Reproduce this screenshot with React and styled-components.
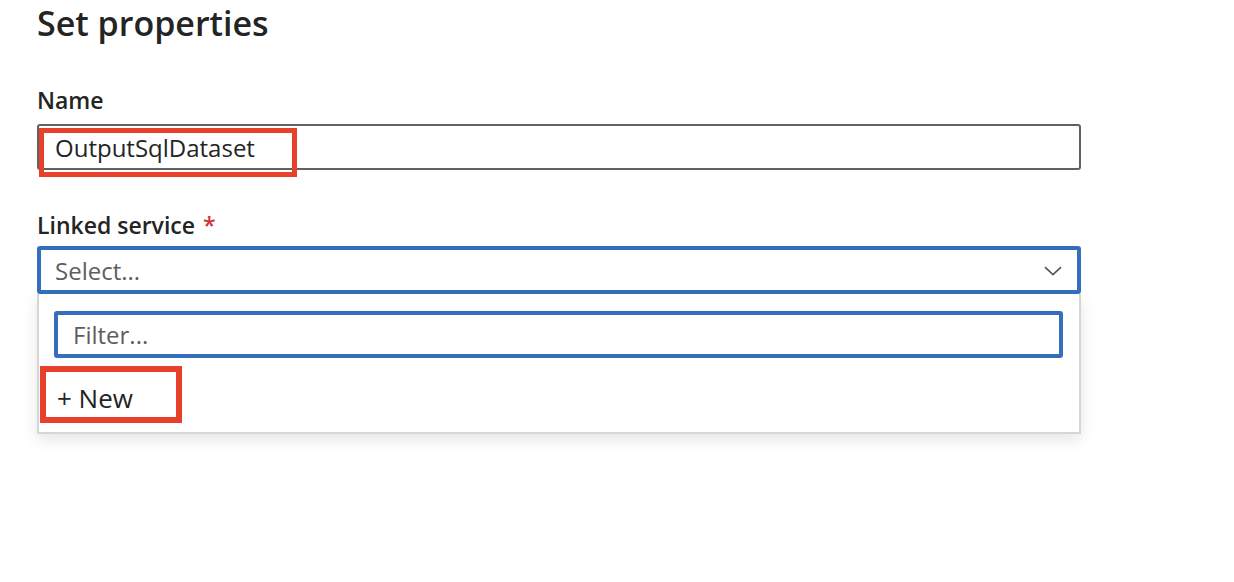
import React from 'react';
import styled, { createGlobalStyle } from 'styled-components';

const GlobalStyle = createGlobalStyle`
  body {
    margin: 0;
    background: #ffffff;
    font-family: "Open Sans", "Noto Sans", sans-serif;
    color: #242424;
  }
`;

const App = () => {
  return (
    <>
      <GlobalStyle />
      <Page>
        <Title>Set properties</Title>

        <Field $gap={42} $inner={9}>
          <Label>Name</Label>
          <InputWrap>
            <TextBox>OutputSqlDataset</TextBox>
            <Highlight $left={2} $top={4} $width={258} $height={49} $border={5} />
          </InputWrap>
        </Field>

        <Field $gap={40} $inner={6}>
          <Label>
            Linked service <Required>*</Required>
          </Label>
          <div>
            <SelectBox>
              <Placeholder>Select...</Placeholder>
              <Chevron width="18" height="10" viewBox="0 0 18 10">
                <path d="M1 1.2 L9 8.6 L17 1.2" fill="none" stroke="#555" strokeWidth="1.6" />
              </Chevron>
            </SelectBox>
            <Dropdown>
              <FilterBox>
                <Placeholder>Filter...</Placeholder>
              </FilterBox>
              <Option>
                + New
                <Highlight $left={1} $top={8} $width={142} $height={57} $border={6} />
              </Option>
            </Dropdown>
          </div>
        </Field>
      </Page>
    </>
  );
};

export default App;

const Page = styled.div`
  width: 1044px;
  padding: 3px 0 40px 37px;
`;

const Title = styled.h1`
  margin: 0;
  font-size: 34px;
  line-height: 40px;
  font-weight: 600;
  color: #242424;
`;

const Field = styled.div`
  display: flex;
  flex-direction: column;
  gap: ${(p) => p.$inner}px;
  margin-top: ${(p) => p.$gap}px;
`;

const Label = styled.div`
  font-size: 23px;
  line-height: 30px;
  font-weight: 600;
  color: #242424;
`;

const Required = styled.span`
  color: #d13438;
  font-weight: 600;
  margin-left: 2px;
`;

const InputWrap = styled.div`
  position: relative;
`;

const TextBox = styled.div`
  box-sizing: border-box;
  height: 46px;
  display: flex;
  align-items: center;
  padding-left: 16px;
  border: 2px solid #616161;
  border-radius: 3px;
  font-size: 24px;
  color: #242424;
`;

const Highlight = styled.div`
  position: absolute;
  box-sizing: border-box;
  left: ${(p) => p.$left}px;
  top: ${(p) => p.$top}px;
  width: ${(p) => p.$width}px;
  height: ${(p) => p.$height}px;
  border: ${(p) => p.$border}px solid #e8412b;
  pointer-events: none;
`;

const SelectBox = styled.div`
  box-sizing: border-box;
  height: 48px;
  display: flex;
  align-items: center;
  justify-content: space-between;
  padding: 0 15px 0 14px;
  border: 4px solid #356fbb;
  border-radius: 3px;
`;

const Placeholder = styled.span`
  font-size: 24px;
  color: #5e5e5e;
`;

const Chevron = styled.svg`
  display: block;
  margin-top: 2px;
`;

const Dropdown = styled.div`
  box-sizing: border-box;
  height: 140px;
  background: #ffffff;
  border: 2px solid #d6d6d6;
  border-top: none;
  box-shadow: 0 6px 14px rgba(0, 0, 0, 0.1);
  padding: 17px 16px 0 15px;
`;

const FilterBox = styled.div`
  box-sizing: border-box;
  height: 47px;
  display: flex;
  align-items: center;
  padding-left: 15px;
  border: 4px solid #356fbb;
  border-radius: 3px;
`;

const Option = styled.div`
  position: relative;
  margin-left: -15px;
  height: 74px;
  display: flex;
  align-items: center;
  padding: 6px 0 0 18px;
  box-sizing: border-box;
  font-size: 26px;
  color: #242424;
`;
